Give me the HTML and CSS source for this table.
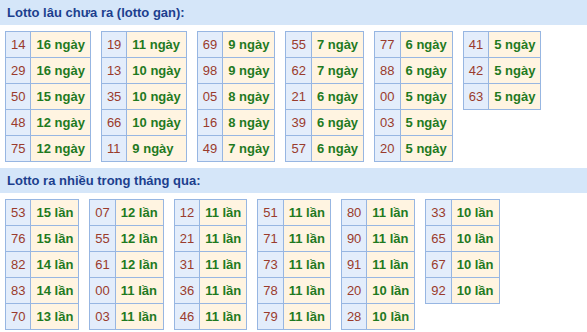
FILE: index.html
```html
<!DOCTYPE html>
<html lang="vi">
<head>
<meta charset="utf-8">
<title>Lotto</title>
<link rel="stylesheet" href="styles.css">
</head>
<body>
<div class="section-title">Lotto lâu chưa ra (lotto gan):</div>
<div class="tables">
  <table class="lt"><tr><td class="n">14</td><td class="v">16 ngày</td></tr><tr><td class="n">29</td><td class="v">16 ngày</td></tr><tr><td class="n">50</td><td class="v">15 ngày</td></tr><tr><td class="n">48</td><td class="v">12 ngày</td></tr><tr><td class="n">75</td><td class="v">12 ngày</td></tr></table>
  <table class="lt"><tr><td class="n">19</td><td class="v">11 ngày</td></tr><tr><td class="n">13</td><td class="v">10 ngày</td></tr><tr><td class="n">35</td><td class="v">10 ngày</td></tr><tr><td class="n">66</td><td class="v">10 ngày</td></tr><tr><td class="n">11</td><td class="v">9 ngày</td></tr></table>
  <table class="lt"><tr><td class="n">69</td><td class="v">9 ngày</td></tr><tr><td class="n">98</td><td class="v">9 ngày</td></tr><tr><td class="n">05</td><td class="v">8 ngày</td></tr><tr><td class="n">16</td><td class="v">8 ngày</td></tr><tr><td class="n">49</td><td class="v">7 ngày</td></tr></table>
  <table class="lt"><tr><td class="n">55</td><td class="v">7 ngày</td></tr><tr><td class="n">62</td><td class="v">7 ngày</td></tr><tr><td class="n">21</td><td class="v">6 ngày</td></tr><tr><td class="n">39</td><td class="v">6 ngày</td></tr><tr><td class="n">57</td><td class="v">6 ngày</td></tr></table>
  <table class="lt"><tr><td class="n">77</td><td class="v">6 ngày</td></tr><tr><td class="n">88</td><td class="v">6 ngày</td></tr><tr><td class="n">00</td><td class="v">5 ngày</td></tr><tr><td class="n">03</td><td class="v">5 ngày</td></tr><tr><td class="n">20</td><td class="v">5 ngày</td></tr></table>
  <table class="lt"><tr><td class="n">41</td><td class="v">5 ngày</td></tr><tr><td class="n">42</td><td class="v">5 ngày</td></tr><tr><td class="n">63</td><td class="v">5 ngày</td></tr></table>
</div>
<div class="section-title">Lotto ra nhiều trong tháng qua:</div>
<div class="tables">
  <table class="lt"><tr><td class="n">53</td><td class="v">15 lần</td></tr><tr><td class="n">76</td><td class="v">15 lần</td></tr><tr><td class="n">82</td><td class="v">14 lần</td></tr><tr><td class="n">83</td><td class="v">14 lần</td></tr><tr><td class="n">70</td><td class="v">13 lần</td></tr></table>
  <table class="lt"><tr><td class="n">07</td><td class="v">12 lần</td></tr><tr><td class="n">55</td><td class="v">12 lần</td></tr><tr><td class="n">61</td><td class="v">12 lần</td></tr><tr><td class="n">00</td><td class="v">11 lần</td></tr><tr><td class="n">03</td><td class="v">11 lần</td></tr></table>
  <table class="lt"><tr><td class="n">12</td><td class="v">11 lần</td></tr><tr><td class="n">21</td><td class="v">11 lần</td></tr><tr><td class="n">31</td><td class="v">11 lần</td></tr><tr><td class="n">36</td><td class="v">11 lần</td></tr><tr><td class="n">46</td><td class="v">11 lần</td></tr></table>
  <table class="lt"><tr><td class="n">51</td><td class="v">11 lần</td></tr><tr><td class="n">71</td><td class="v">11 lần</td></tr><tr><td class="n">73</td><td class="v">11 lần</td></tr><tr><td class="n">78</td><td class="v">11 lần</td></tr><tr><td class="n">79</td><td class="v">11 lần</td></tr></table>
  <table class="lt"><tr><td class="n">80</td><td class="v">11 lần</td></tr><tr><td class="n">90</td><td class="v">11 lần</td></tr><tr><td class="n">91</td><td class="v">11 lần</td></tr><tr><td class="n">20</td><td class="v">10 lần</td></tr><tr><td class="n">28</td><td class="v">10 lần</td></tr></table>
  <table class="lt"><tr><td class="n">33</td><td class="v">10 lần</td></tr><tr><td class="n">65</td><td class="v">10 lần</td></tr><tr><td class="n">67</td><td class="v">10 lần</td></tr><tr><td class="n">92</td><td class="v">10 lần</td></tr></table>
</div>
</body>
</html>
```
FILE: styles.css
```css
html, body {
  margin: 0;
  padding: 0;
  background: #ffffff;
  font-family: "Liberation Sans", Arial, sans-serif;
  font-size: 13px;
}

.section-title {
  height: 25px;
  line-height: 25px;
  padding-left: 7px;
  background: #d5e6f9;
  color: #1c3f8e;
  font-weight: bold;
  font-size: 13px;
}

.tables {
  display: flex;
  align-items: flex-start;
  gap: 10px;
  padding: 6px 5px;
}

.lt {
  border-collapse: collapse;
}

.lt td {
  height: 25px;
  padding: 0 5px;
  border: 1px solid #97b6e2;
  white-space: nowrap;
}

.lt .n {
  background: #e3edfb;
  color: #9a3b2c;
}

.lt .v {
  background: #fff4e1;
  color: #1f7a1f;
  font-weight: bold;
}
```
